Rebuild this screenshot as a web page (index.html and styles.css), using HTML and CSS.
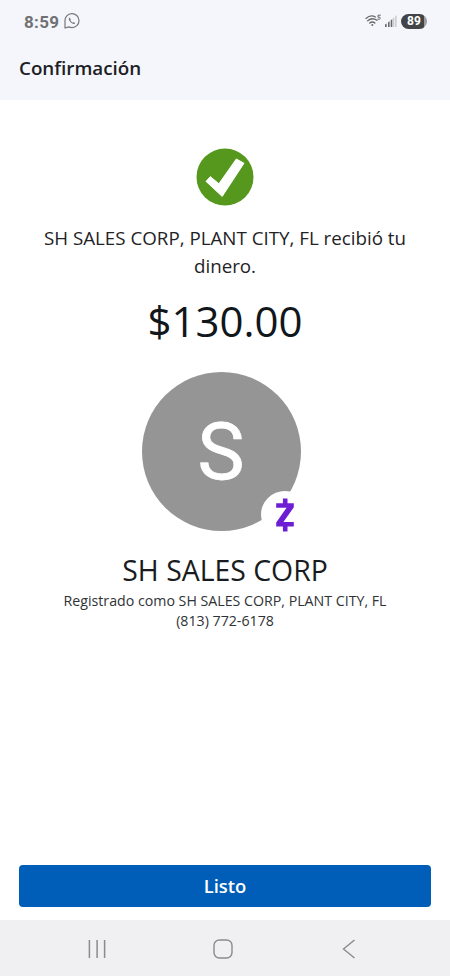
FILE: index.html
```html
<!DOCTYPE html>
<html lang="es">
<head>
<meta charset="utf-8">
<title>Confirmación</title>
<link rel="stylesheet" href="styles.css">
</head>
<body>
<div class="screen">
  <header class="header">
    <div class="status">
      <span class="clock">8:59</span>
      <svg class="whatsapp" viewBox="0 0 16 16" width="16" height="16" fill="none" stroke="#77787b" stroke-width="1.2">
        <path d="M1 15 V8 A7 7 0 1 1 8.100 14.600 Q6.400 14.600 4.900 13.900 Z" stroke-linejoin="round"/>
        <path d="M5.400 4.500 C4.300 5.300 4.700 7.200 6.400 9 C8.300 10.900 10.400 11.500 11.300 10.200 L9.700 9 L8.800 9.700 Q7.100 8.900 6.300 7.100 L6.900 6.300 Z" fill="#77787b" stroke="none"/>
      </svg>
      <div class="indicators">
        <svg width="17" height="13" viewBox="0 0 17 13" fill="none" stroke="#666769" stroke-width="1.300" stroke-linecap="round">
          <path d="M1 4.400 Q5.700 .2 10.400 3"/>
          <path d="M2.700 6.800 Q7.200 3 11.900 6.300"/>
          <path d="M4.700 9.100 Q7.300 6.900 9.900 9.100"/>
          <circle cx="7.300" cy="11" r="1" fill="#666769" stroke="none"/>
          <path d="M15.400 1.200 H13 V3.200 Q15.600 2.800 15.300 4.500 Q14.800 5.800 12.700 5.200" stroke-width="1"/>
        </svg>
        <svg width="12" height="12" viewBox="0 0 12 12">
          <path d="M0 9.500 L1.600 8.500 V12 H0 Z M3 7.500 L4.600 6.300 V12 H3 Z M5.700 5.300 L7.300 4 V12 H5.700 Z" fill="#67686a"/>
          <path d="M8.200 3 L9.200 2.200 V12 H8.200 Z M10.300 1.200 L11.500 .2 V12 H10.300 Z" fill="#bfc0c4"/>
        </svg>
        <span class="battery">89</span>
      </div>
    </div>
    <h1 class="title">Confirmación</h1>
  </header>
  <main class="content">
    <svg class="check" width="58" height="58" viewBox="0 0 58 58">
      <circle cx="29" cy="29" r="28.500" fill="#55981d"/>
      <path d="M10 33.400 L14.300 28.600 L22.900 35.800 L40.300 11 L48 15.200 L26.200 48.400 Z" fill="#fff" stroke="#fff" stroke-width="1" stroke-linejoin="round"/>
    </svg>
    <p class="message">SH SALES CORP, PLANT CITY, FL recibió tu dinero.</p>
    <p class="amount">$130.00</p>
    <div class="avatar">
      <span class="initial">S</span>
      <span class="badge">
        <svg width="20" height="34" viewBox="0 0 20 34" fill="#6d1ed4">
          <path d="M1.200 5.200 H18.800 V9.300 L8.400 24 H18.800 V28.500 H1.200 V24.500 L11.600 9.700 H1.200 Z"/>
          <path d="M7.900 .5 H12.500 V6 H7.900 Z M7.900 28 H12.500 V33.600 H7.900 Z"/>
        </svg>
      </span>
    </div>
    <h2 class="name">SH SALES CORP</h2>
    <p class="detail">Registrado como SH SALES CORP, PLANT CITY, FL</p>
    <p class="detail">(813) 772-6178</p>
    <button class="done">Listo</button>
  </main>
  <nav class="navbar">
    <svg width="20" height="20" viewBox="0 0 20 20" stroke="#8b8b8e" stroke-width="1.500"><path d="M2.400 1 V19 M10.100 1 V19 M17.600 1 V19"/></svg>
    <svg width="20" height="20" viewBox="0 0 20 20" fill="none" stroke="#8b8b8e" stroke-width="1.400"><rect x="1" y="1" width="18" height="18" rx="5.500"/></svg>
    <svg width="20" height="20" viewBox="0 0 20 20" fill="none" stroke="#8b8b8e" stroke-width="1.400"><path d="M15.500 1 L4.500 10 L15.500 19"/></svg>
  </nav>
</div>
</body>
</html>
```
FILE: styles.css
```css
* { box-sizing: border-box; margin: 0; }
body { background: #fff; font-family: "Open Sans", sans-serif; color: #1f2326; }
.screen { display: flex; flex-direction: column; height: 976px; }
.header { height: 100px; background: #f5f6fb; }
.status { display: flex; align-items: center; height: 42px; padding: 0 23px 0 24px; }
.clock { padding-top: 1px; font: 700 17px/20px Roboto, sans-serif; color: #707174; letter-spacing: .3px; }
.whatsapp { margin-left: 5px; }
.indicators { display: flex; align-items: center; gap: 4px; margin-left: auto; }
.indicators svg:first-child { margin: -2px -1px 0 0; }
.battery { width: 26px; height: 15px; border-radius: 8px; background: linear-gradient(90deg, #434447 23px, #9c9da0 23px); color: #fff; font: 700 12px/15px Roboto, sans-serif; text-align: center; }
.title { padding-left: 19px; font-size: 18.800px; font-weight: 600; line-height: 52px; color: #1c2025; }
.content { flex: 1; display: flex; flex-direction: column; align-items: center; padding: 48px 19px 13px; text-align: center; }
.check { flex: none; }
.message { width: 380px; margin-top: 18px; font-size: 18.750px; line-height: 28px; }
.amount { margin-top: 12px; font-size: 42px; line-height: 57px; color: #11161b; }
.avatar { position: relative; display: flex; align-items: center; justify-content: center; width: 159px; height: 159px; margin: 23px 8px 0 0; border-radius: 50%; background: #959595; }
.initial { font: 400 79px/94px Roboto, sans-serif; color: #fff; -webkit-text-stroke: .8px #fff; }
.badge { position: absolute; right: -8px; bottom: -7px; display: flex; align-items: center; justify-content: center; width: 48px; height: 47px; border-radius: 50%; background: #fff; }
.name { margin-top: 19px; font-size: 28.400px; font-weight: 400; line-height: 40px; color: #181c20; }
.detail { font-size: 14.200px; line-height: 20px; color: #303336; }
.name + .detail { margin-top: 1px; }
.done { width: 100%; height: 42px; margin-top: auto; border: 0; border-radius: 4px; background: #005eb8; color: #fff; font: 600 18.400px/42px "Open Sans", sans-serif; padding: 0; }
.navbar { display: flex; justify-content: space-between; align-items: center; height: 56px; padding: 2px 91px 0 87px; background: #f0f0f3; }
```
